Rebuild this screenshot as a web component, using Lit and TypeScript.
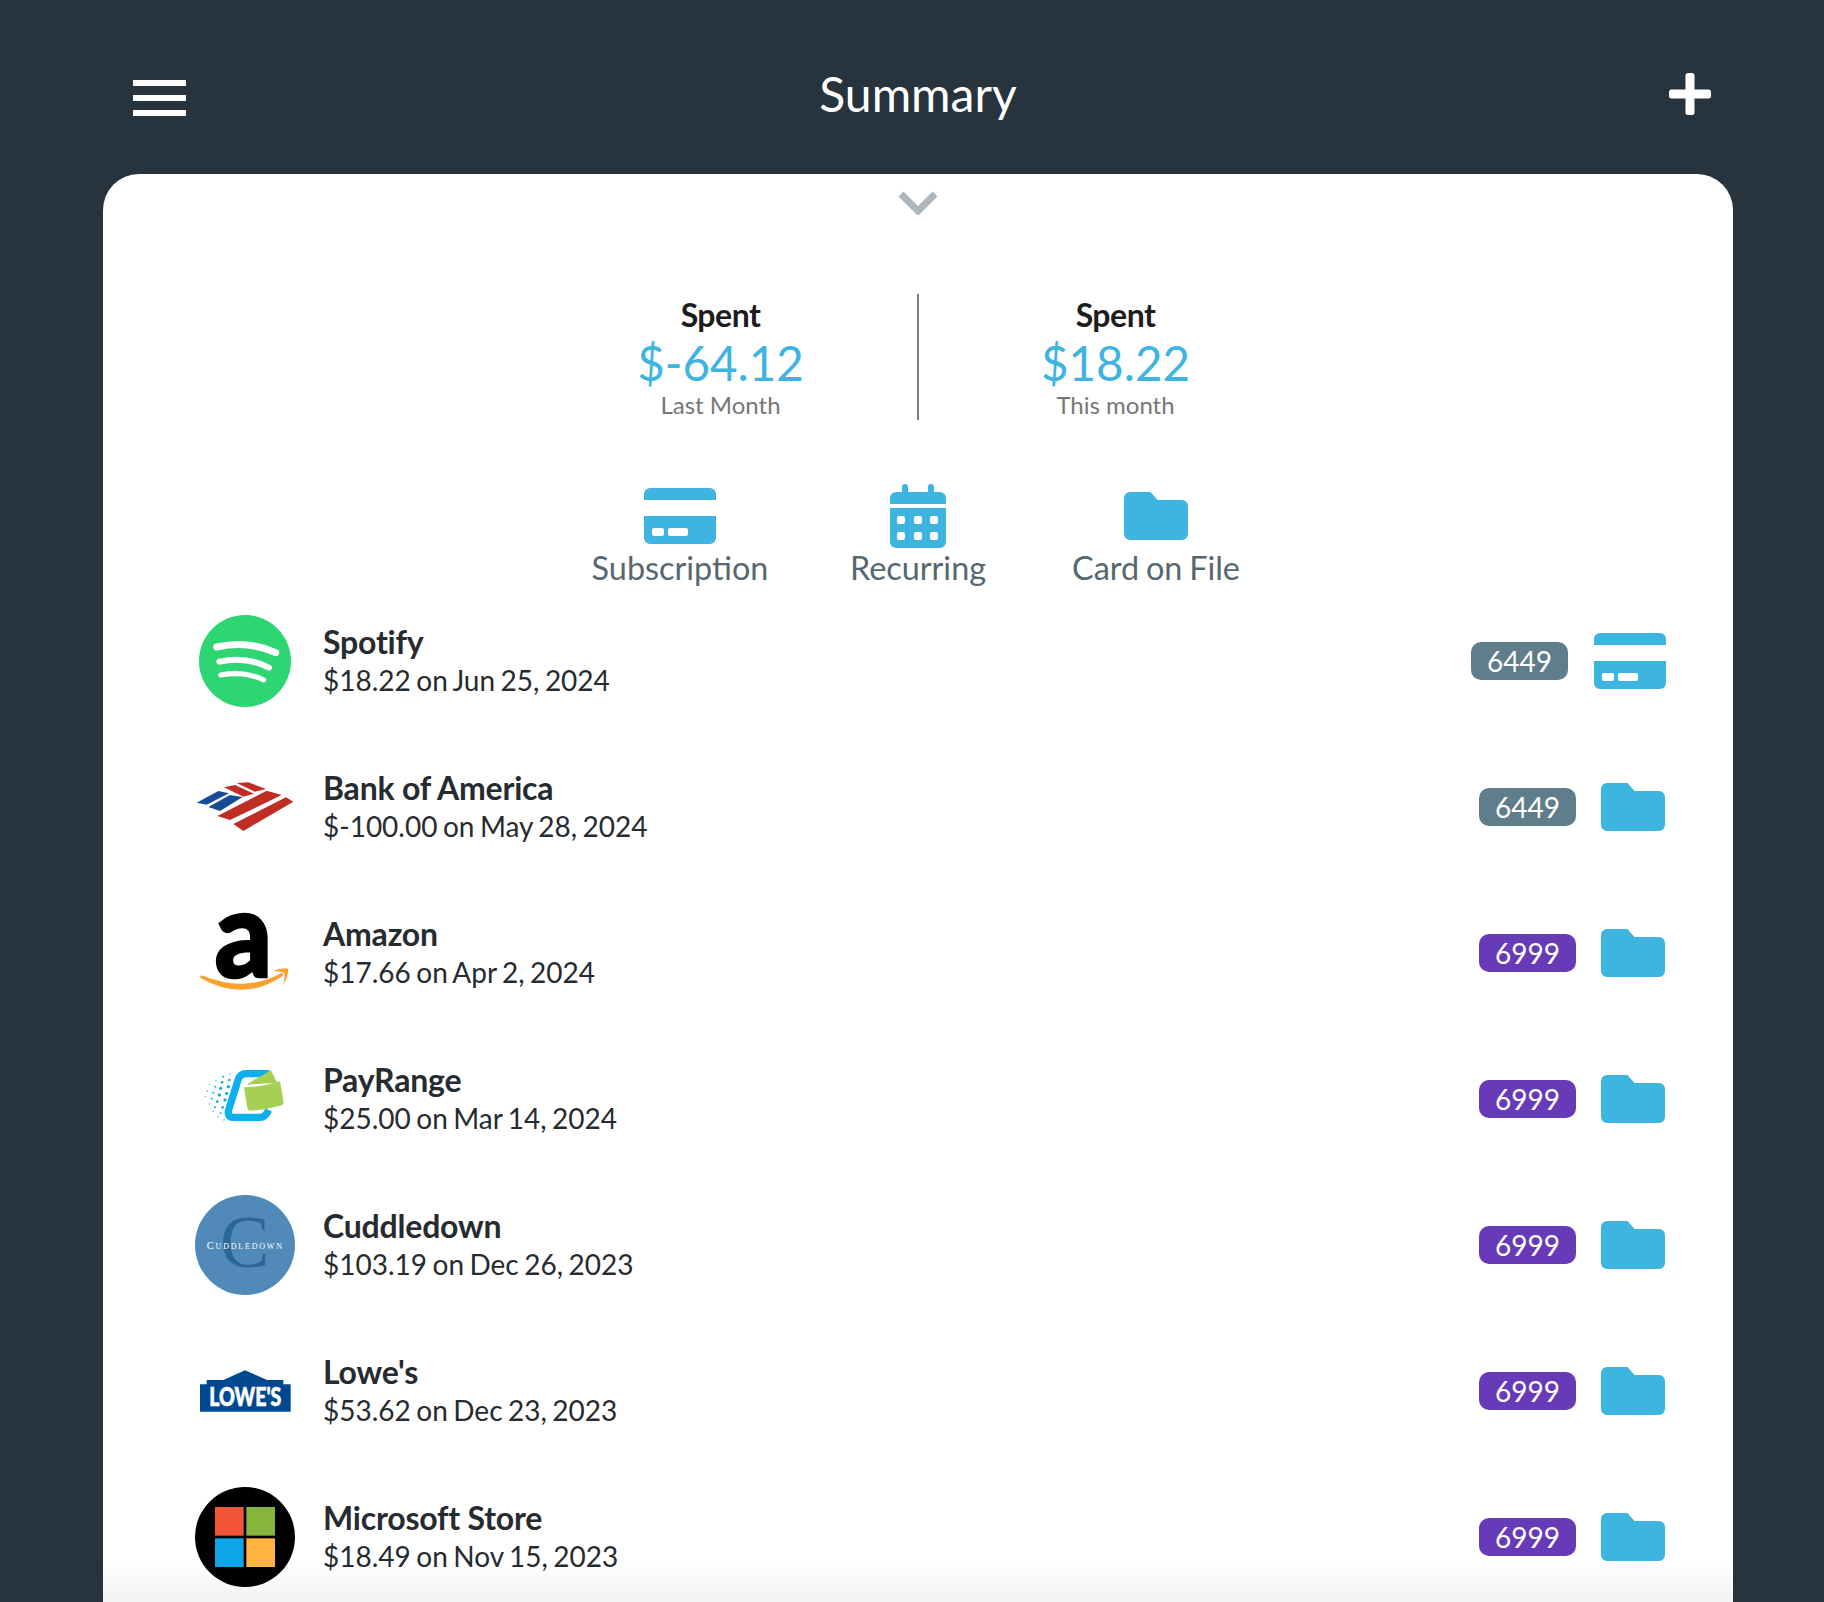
import { LitElement, html, css, svg } from "lit";
import { customElement } from "lit/decorators.js";

// icons, sized from the reference
const cardIcon = html`<svg class="card" viewBox="0 0 72 56"><path fill-rule="evenodd" d="M6 0H66a6 6 0 0 1 6 6V12H0V6A6 6 0 0 1 6 0ZM0 28H72V50a6 6 0 0 1-6 6H6a6 6 0 0 1-6-6ZM10 40a2 2 0 0 0-2 2v4a2 2 0 0 0 2 2h8a2 2 0 0 0 2-2v-4a2 2 0 0 0-2-2ZM26 40a2 2 0 0 0-2 2v4a2 2 0 0 0 2 2h16a2 2 0 0 0 2-2v-4a2 2 0 0 0-2-2Z"/></svg>`;
const folderIcon = html`<svg class="folder" viewBox="0 0 64 48"><path d="M6 0H26.500L33.500 8H58a6 6 0 0 1 6 6V42a6 6 0 0 1-6 6H6a6 6 0 0 1-6-6V6A6 6 0 0 1 6 0Z"/></svg>`;
const calendarIcon = html`<svg class="calendar" viewBox="0 0 56 64"><path fill-rule="evenodd" d="M12 3a3 3 0 0 1 6 0V8H38V3a3 3 0 0 1 6 0V8H50a6 6 0 0 1 6 6V20H0V14A6 6 0 0 1 6 8H12ZM0 24H56V58a6 6 0 0 1-6 6H6a6 6 0 0 1-6-6ZM9 32a2 2 0 0 0-2 2v4a2 2 0 0 0 2 2h4a2 2 0 0 0 2-2v-4a2 2 0 0 0-2-2ZM26 32a2 2 0 0 0-2 2v4a2 2 0 0 0 2 2h4a2 2 0 0 0 2-2v-4a2 2 0 0 0-2-2ZM42 32a2 2 0 0 0-2 2v4a2 2 0 0 0 2 2h4a2 2 0 0 0 2-2v-4a2 2 0 0 0-2-2ZM9 48a2 2 0 0 0-2 2v4a2 2 0 0 0 2 2h4a2 2 0 0 0 2-2v-4a2 2 0 0 0-2-2ZM26 48a2 2 0 0 0-2 2v4a2 2 0 0 0 2 2h4a2 2 0 0 0 2-2v-4a2 2 0 0 0-2-2ZM42 48a2 2 0 0 0-2 2v4a2 2 0 0 0 2 2h4a2 2 0 0 0 2-2v-4a2 2 0 0 0-2-2Z"/></svg>`;

const payDots = [
  [150, 552, 2], [130, 560, 3], [148, 570, 4], [108, 572, 2], [126, 577, 4], [145, 590, 5], [88, 583, 2],
  [105, 590, 3], [122, 595, 5], [140, 610, 5], [82, 603, 2], [100, 608, 3], [118, 615, 5], [135, 630, 5],
  [76, 620, 2], [95, 626, 3], [112, 635, 4], [128, 652, 4], [88, 642, 2], [105, 652, 3], [122, 670, 3],
  [100, 665, 2], [115, 680, 2], [132, 690, 2],
];

// each logo is a 100px box, drawn in 3x units around the row centre
const logos = {
  spotify: html`<svg viewBox="45 33 300 300">
    <circle cx="195" cy="183" r="138" fill="#2ed573"/>
    <g fill="none" stroke="#fff" stroke-linecap="round">
      <path d="M110 141Q205 120 287 158" stroke-width="21"/>
      <path d="M118 185Q200 168 267 203" stroke-width="18"/>
      <path d="M122 225Q195 212 251 240" stroke-width="15"/>
    </g></svg>`,
  bofa: html`<svg viewBox="45 471 300 300">
    <g fill="#164c94"><path d="M50 608 115 573 147 580 80 614Z"/><path d="M85 621 150 585 188 591 120 633Z"/></g>
    <g fill="#c02d25"><path d="M170 549 205 547 258 567 225 575Z"/><path d="M132 562 165 555 222 581 190 590Z"/>
    <path d="M112 648 260 572 305 585 150 660Z"/><path d="M160 672 318 592 340 605 190 693Z"/></g></svg>`,
  amazon: html`<svg viewBox="45 39 300 300">
    <text class="amz" x="190" y="262" text-anchor="middle" textLength="172" lengthAdjust="spacingAndGlyphs">a</text>
    <path d="M65 261Q190 332 305 254 195 314 65 261Z" fill="#f9a02f" stroke="#f9a02f" stroke-width="9" stroke-linejoin="round"/>
    <path d="M278 244Q305 232 325 236 324 262 310 284 316 258 312 248 298 244 278 244Z" fill="#f9a02f"/></svg>`,
  payrange: html`<svg viewBox="45 477 300 300">
    <g fill="#0cb0ec">${payDots.map(([x, y, r]) => svg`<circle cx=${x} cy=${y} r=${r}/>`)}</g>
    <path d="M268 551H198Q180 551 174 570L146 660Q140 682 162 682H240Q256 682 266 660" fill="none" stroke="#0cb0ec" stroke-width="22"/>
    <path d="M205 582 272 543 288 576Z" fill="#a6cf54" stroke="#a6cf54" stroke-width="4" stroke-linejoin="round"/>
    <path d="M192 592Q250 590 300 574L311 636Q312 644 304 646 260 660 212 662 204 662 202 654Z" fill="#a6cf54"/></svg>`,
  cuddledown: html`<svg viewBox="45 75 300 300">
    <circle cx="195" cy="225" r="150" fill="#5189b9"/>
    <text class="cd-c" x="194" y="290" text-anchor="middle">C</text>
    <text class="cd-t" x="80" y="237" textLength="226">C<tspan class="cd-s">UDDLEDOWN</tspan></text></svg>`,
  lowes: html`<svg viewBox="45 513 300 300">
    <path d="M60 725V643H80V630H130L195 601 262 630H310V643H332V725Z" fill="#004990"/>
    <text class="lw" x="88" y="708" textLength="216" lengthAdjust="spacingAndGlyphs">LOWE'S</text></svg>`,
  microsoft: html`<svg viewBox="45 950 300 300">
    <circle cx="195" cy="1100" r="150" fill="#000"/>
    <rect x="105" y="1010" width="86" height="86" fill="#f25636"/>
    <rect x="199" y="1010" width="86" height="86" fill="#85b53d"/>
    <rect x="105" y="1104" width="86" height="86" fill="#0fa5e9"/>
    <rect x="199" y="1104" width="86" height="86" fill="#ffb340"/></svg>`,
};

const rows = [
  { logo: logos.spotify, name: "Spotify", detail: "$18.22 on Jun 25, 2024", last4: "6449", icon: cardIcon },
  { logo: logos.bofa, name: "Bank of America", detail: "$-100.00 on May 28, 2024", last4: "6449", icon: folderIcon },
  { logo: logos.amazon, name: "Amazon", detail: "$17.66 on Apr 2, 2024", last4: "6999", icon: folderIcon },
  { logo: logos.payrange, name: "PayRange", detail: "$25.00 on Mar 14, 2024", last4: "6999", icon: folderIcon },
  { logo: logos.cuddledown, name: "Cuddledown", detail: "$103.19 on Dec 26, 2023", last4: "6999", icon: folderIcon },
  { logo: logos.lowes, name: "Lowe's", detail: "$53.62 on Dec 23, 2023", last4: "6999", icon: folderIcon },
  { logo: logos.microsoft, name: "Microsoft Store", detail: "$18.49 on Nov 15, 2023", last4: "6999", icon: folderIcon },
];

@customElement("app-root")
export class AppRoot extends LitElement {
  static styles = css`
    :host {
      display: block;
      height: 1602px;
      overflow: hidden;
      padding-left: 12px;
      box-sizing: border-box;
      background: #27333d;
      font-family: Lato, "Liberation Sans", sans-serif;
    }
    header {
      height: 174px;
      padding: 0 113px;
      display: grid;
      grid-template-columns: 1fr auto 1fr;
      align-items: center;
    }
    .burger {
      display: flex;
      flex-direction: column;
      gap: 9px;
      width: 53px;
      margin-left: 8px;
      margin-top: 22px;
    }
    .burger i {
      height: 6px;
      background: #fff;
    }
    h1 {
      margin: 12px 0 0;
      font-size: 48px;
      font-weight: 400;
      color: #fff;
    }
    .plus {
      justify-self: end;
      width: 42px;
      height: 42px;
      margin-top: 14px;
    }
    .panel {
      margin: 0 91px;
      height: 1428px;
      box-sizing: border-box;
      padding: 17px 67px 0 92px;
      background: linear-gradient(#fff 1386px, #f3f3f3 1428px);
      border-radius: 36px 36px 0 0;
    }
    .top {
      margin-right: 25px;
    }
    .chevron {
      width: 40px;
      height: 24px;
      margin: 0 auto;
    }
    .stats {
      display: grid;
      grid-template-columns: 1fr 2px 1fr;
      width: 788px;
      height: 126px;
      margin: 79px auto 0;
      text-align: center;
    }
    .stats .rule {
      background: #7c7c7c;
      height: 126px;
    }
    .spent {
      font-size: 32px;
      line-height: 42px;
      font-weight: 700;
      color: #1d1d1d;
      letter-spacing: -0.5px;
    }
    .amount {
      font-size: 47.5px;
      line-height: 54px;
      color: #3eb4e1;
    }
    .period {
      font-size: 24px;
      line-height: 30px;
      color: #777;
    }
    .tabs {
      display: grid;
      grid-template-columns: repeat(3, 238px);
      justify-content: center;
      margin-top: 64px;
    }
    .tab {
      display: flex;
      flex-direction: column;
      align-items: center;
      font-size: 32.4px;
      line-height: 40px;
      word-spacing: -1.5px;
      white-space: nowrap;
      color: #56676f;
    }
    .tab .slot {
      height: 64px;
      display: flex;
      align-items: center;
    }
    svg {
      display: block;
    }
    .card, .folder, .calendar {
      fill: #3eb4e1;
    }
    .card { width: 72px; height: 56px; }
    .folder { width: 64px; height: 48px; }
    .calendar { width: 56px; height: 64px; }
    .row {
      display: flex;
      align-items: center;
      height: 146px;
    }
    .logo {
      width: 100px;
      height: 100px;
      margin-right: 28px;
    }
    .logo svg {
      width: 100px;
      height: 100px;
      overflow: visible;
    }
    .info {
      flex: 1;
    }
    .name {
      font-size: 32px;
      line-height: 38px;
      font-weight: 700;
      color: #262b2f;
      letter-spacing: -0.2px;
    }
    .detail {
      font-size: 28px;
      line-height: 38px;
      word-spacing: -1.7px;
      color: #262b2f;
    }
    .badge {
      width: 97px;
      height: 38px;
      line-height: 38px;
      border-radius: 10px;
      text-align: center;
      font-size: 28px;
      color: #fff;
      background: #607d8b;
      margin-right: 25px;
    }
    .badge.purple {
      background: #673ab7;
    }
    .row .card {
      margin-left: 1px;
    }
    .row .folder {
      margin-right: 1px;
    }
    .amz {
      font: 900 358px Lato, sans-serif;
      fill: #000;
      stroke: #000;
      stroke-width: 8px;
    }
    .cd-c {
      font: 400 222px "Liberation Serif", serif;
      fill: #2a6797;
    }
    .cd-t {
      font: 400 32px "Liberation Serif", serif;
      fill: #fff;
    }
    .cd-s {
      font-size: 24px;
    }
    .lw {
      font: 900 80px Lato, sans-serif;
      fill: #fff;
      stroke: #fff;
      stroke-width: 2px;
    }
  `;

  render() {
    return html`
      <header>
        <div class="burger"><i></i><i></i><i></i></div>
        <h1>Summary</h1>
        <svg class="plus" viewBox="0 0 42 42"><path fill="#fff" d="M19 0h4a2.500 2.500 0 0 1 2.500 2.500V16.500H39.500a2.500 2.500 0 0 1 2.500 2.500v4a2.500 2.500 0 0 1-2.500 2.500H25.500V39.500a2.500 2.500 0 0 1-2.500 2.500h-4a2.500 2.500 0 0 1-2.500-2.500V25.500H2.500A2.500 2.500 0 0 1 0 23v-4a2.500 2.500 0 0 1 2.500-2.500H16.500V2.500A2.500 2.500 0 0 1 19 0Z"/></svg>
      </header>
      <section class="panel">
        <div class="top">
          <svg class="chevron" viewBox="0 0 40 24"><polyline points="3,3 20,20 37,3" fill="none" stroke="#adb5bd" stroke-width="7"/></svg>
          <div class="stats">
            <div>
              <div class="spent">Spent</div>
              <div class="amount">$-64.12</div>
              <div class="period">Last Month</div>
            </div>
            <div class="rule"></div>
            <div>
              <div class="spent">Spent</div>
              <div class="amount">$18.22</div>
              <div class="period">This month</div>
            </div>
          </div>
          <div class="tabs">
            <div class="tab"><div class="slot">${cardIcon}</div>Subscription</div>
            <div class="tab"><div class="slot">${calendarIcon}</div>Recurring</div>
            <div class="tab"><div class="slot">${folderIcon}</div>Card on File</div>
          </div>
        </div>
        ${rows.map(
          (r) => html`
            <div class="row">
              <div class="logo">${r.logo}</div>
              <div class="info">
                <div class="name">${r.name}</div>
                <div class="detail">${r.detail}</div>
              </div>
              <div class="badge ${r.last4 === "6999" ? "purple" : ""}">${r.last4}</div>
              ${r.icon}
            </div>
          `
        )}
      </section>
    `;
  }
}
